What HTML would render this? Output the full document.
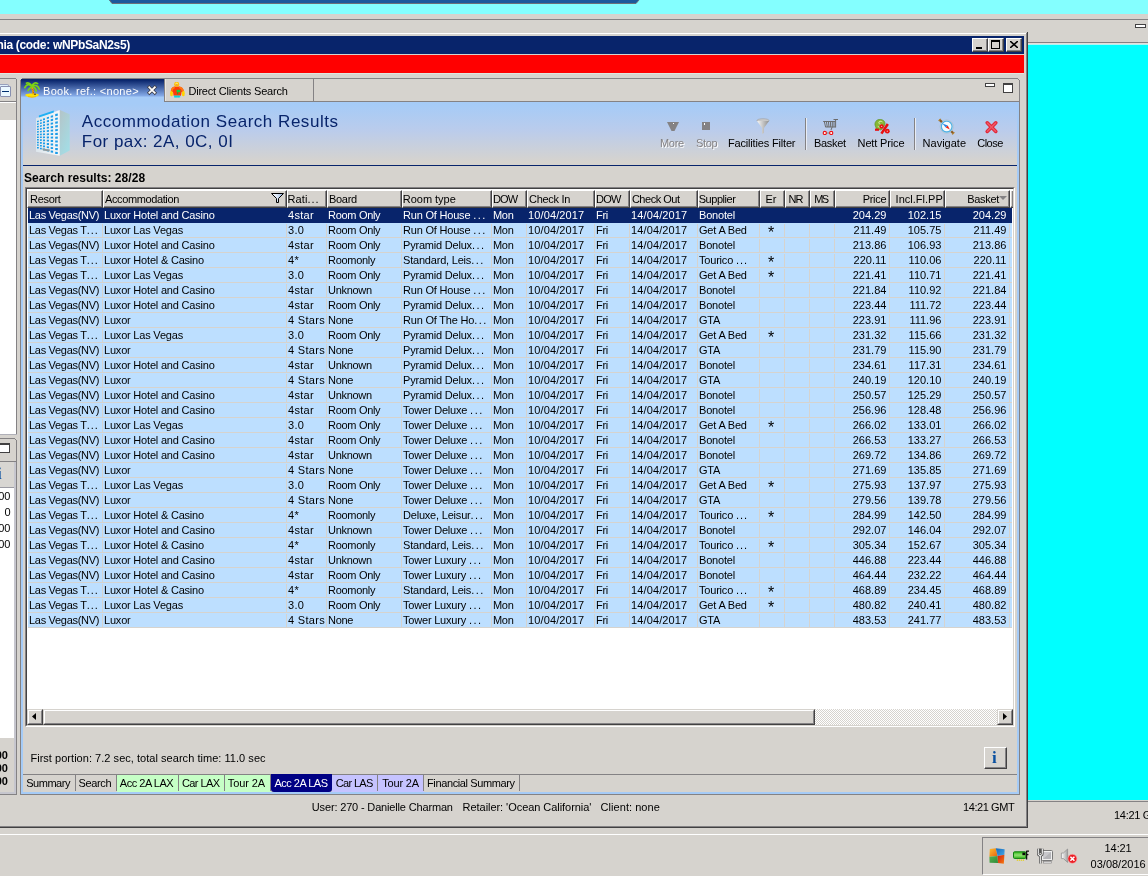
<!DOCTYPE html>
<html><head><meta charset="utf-8"><title>Accommodation Search Results</title>
<style>
html,body{margin:0;padding:0}
body{will-change:transform;width:1148px;height:876px;position:relative;overflow:hidden;background:#D6D3CE;font-family:"Liberation Sans",sans-serif;font-size:11px;color:#000;line-height:13px}
div,span,i,svg,b{position:absolute;box-sizing:border-box;display:block}
.t{white-space:pre;letter-spacing:-0.3px}
/* raised button */
.btn{background:#D6D3CE;border-top:1px solid #fff;border-left:1px solid #fff;border-right:1px solid #424142;border-bottom:1px solid #424142}
.btn:after{content:"";position:absolute;left:0;top:0;right:0;bottom:0;border-right:1px solid #848284;border-bottom:1px solid #848284}
/* scrollbar buttons */
.sbtn{background:#D6D3CE;border-top:1px solid #D6D3CE;border-left:1px solid #D6D3CE;border-right:1px solid #424142;border-bottom:1px solid #424142}
.sbtn:after{content:"";position:absolute;left:0;top:0;right:0;bottom:0;border-top:1px solid #fff;border-left:1px solid #fff;border-right:1px solid #848284;border-bottom:1px solid #848284}
/* table */
.hc{top:190px;height:18px;background:#D6D3CE;border-top:1px solid #fff;border-left:1px solid #fff;border-right:1px solid #424142;border-bottom:1px solid #424142;overflow:hidden}
.hc:after{content:"";position:absolute;left:0;top:0;right:0;bottom:0;border-right:1px solid #848284;border-bottom:1px solid #848284}
.hc span{top:2px;white-space:pre;letter-spacing:-0.3px}
em{font-style:normal;letter-spacing:1px}
.flt{right:2px;top:2px}
.sortarr{right:2px;top:5px;width:0;height:0;border-left:4px solid transparent;border-right:4px solid transparent;border-top:4px solid #848284}
.row{left:28px;width:984px;height:15px;background:#BDDFFF;border-bottom:1px solid #D6D3CE}
.row .c{top:1px;height:14px;white-space:pre;overflow:hidden;letter-spacing:-0.3px;padding-left:1px;border-right:1px solid #D6D3CE;line-height:13px}
.row .c.first{padding-left:1px}
.row .c.num{letter-spacing:0.12px}
.row .k1{letter-spacing:-0.2px}.row .k2{letter-spacing:0.3px}.row .k4{letter-spacing:-0.2px}.row .k4 em{letter-spacing:1.5px}.row .k9{letter-spacing:-0.2px}.row .k10{font-size:16px;line-height:17px;letter-spacing:0;padding-right:2px}
.row .c.ar{text-align:right;padding-right:2.6px;letter-spacing:0}
.row .c.ac{text-align:center;padding-left:0}
.row.sel{background:#08246B;color:#fff;border-bottom-color:#08246B}
.row.sel .c{border-right-color:#08246B}
</style></head><body>
<!-- desktop strips -->
<div style="left:0;top:0;width:1148px;height:14px;background:#84FFFF"></div>
<svg style="left:100px;top:0" width="550" height="6" viewBox="100 0 550 6"><polygon points="109,0 639,0 636,3.5 112,3.5" fill="#1C5A9C"/><path d="M109.5 0 L112 3.5 H636 L639 0" fill="none" stroke="#6B7078" stroke-width="1"/></svg>
<div style="left:0;top:19px;width:1148px;height:1px;background:#848284"></div>
<div style="left:1028px;top:42px;width:120px;height:1px;background:#848284"></div>
<div style="left:1028px;top:43px;width:120px;height:1px;background:#E6DED8"></div><div style="left:0;top:73px;width:1024px;height:1px;background:#DEE6E0"></div>
<div style="left:1028px;top:44px;width:120px;height:756px;background:#00FFFF"></div><div style="left:1028px;top:44px;width:120px;height:1px;background:#B0F4F4"></div>
<div style="left:1028px;top:801px;width:120px;height:1px;background:#848284"></div>
<div style="left:1135px;top:24px;width:11px;height:4px;background:#fff;border:1px solid #424142"></div>
<span class="t" style="left:1114px;top:809px">14:21 GMT</span>
<!-- main window frame -->
<div style="left:0;top:33px;width:1026px;height:1px;background:#fff"></div>
<div style="left:1026px;top:33px;width:1px;height:794px;background:#848284"></div>
<div style="left:1027px;top:32px;width:1px;height:796px;background:#424142"></div>
<div style="left:0;top:826px;width:1027px;height:1px;background:#848284"></div>
<div style="left:0;top:827px;width:1028px;height:1px;background:#424142"></div>
<div style="left:0;top:36px;width:1024px;height:18px;background:#08246B"></div>
<div style="left:0;top:55px;width:1024px;height:18px;background:#FF0000"></div>
<span class="t" style="left:-3.5px;top:39px;font-size:12px;color:#fff;font-weight:bold;letter-spacing:-0.33px" id="ttl">nia (code: wNPbSaN2s5)</span>
<!-- window buttons -->
<div class="btn" style="left:972px;top:38px;width:16px;height:14px"><i style="left:3px;top:8px;width:6px;height:2px;background:#000"></i></div>
<div class="btn" style="left:988px;top:38px;width:16px;height:14px"><i style="left:2px;top:1px;width:9px;height:9px;border:1px solid #000;border-top-width:2px"></i></div>
<div class="btn" style="left:1006px;top:38px;width:16px;height:14px"><svg style="left:3px;top:2px" width="8" height="7" viewBox="0 0 8 7"><path d="M0 0 L8 7 M8 0 L0 7" stroke="#000" stroke-width="1.6"/></svg></div>
<!-- left side panel (cut off) -->
<div style="left:0;top:78px;width:16px;height:1px;background:#848284"></div>
<div style="left:16px;top:79px;width:1px;height:356px;background:#848284"></div>
<div style="left:0;top:84px;width:9px;height:11px;background:#E0F0FC;border:1px solid #98A0BC;border-left:0;border-radius:0 2px 0 0"></div>
<div style="left:0;top:86px;width:11px;height:11px;background:#EAF8FF;border:1px solid #8890B0;border-radius:1px"><i style="left:1px;top:4px;width:7px;height:1px;background:#003070"></i></div>
<div style="left:0;top:101px;width:16px;height:1px;background:#848284"></div>
<div style="left:0;top:102px;width:16px;height:1px;background:#fff"></div>
<div style="left:0;top:120px;width:16px;height:314px;background:#fff"></div>
<div style="left:0;top:434px;width:17px;height:1px;background:#B0B0B8"></div>
<div style="left:0;top:438px;width:15px;height:1px;background:#848284"></div>
<div style="left:15px;top:439px;width:1px;height:1px;background:#848284"></div>
<div style="left:16px;top:440px;width:1px;height:354px;background:#848284"></div>
<div style="left:14px;top:462px;width:2px;height:332px;background:#C6C6CE"></div>
<div style="left:0;top:792px;width:16px;height:2px;background:#C6C6CE"></div>
<div style="left:0;top:443px;width:10px;height:10px;background:#fff;border:1px solid #424142;border-top-width:2px;border-left:0"></div>
<div style="left:0;top:461px;width:16px;height:1px;background:#848284"></div>
<div style="left:0;top:462px;width:14px;height:25px;background:#D8D6D2"></div>
<span style="left:-3px;top:465px;font-family:'Liberation Serif',serif;font-weight:bold;font-size:17px;line-height:17px;color:#0A50A0">i</span>
<div style="left:0;top:487px;width:14px;height:1px;background:#9C9CA4"></div>
<div style="left:0;top:488px;width:14px;height:250px;background:#fff"></div>
<span class="t" style="left:-3.5px;top:490px;width:14px;text-align:right;letter-spacing:0">00</span>
<span class="t" style="left:-3.5px;top:506px;width:14px;text-align:right;letter-spacing:0">0</span>
<span class="t" style="left:-3.5px;top:522px;width:14px;text-align:right;letter-spacing:0">00</span>
<span class="t" style="left:-3.5px;top:538px;width:14px;text-align:right;letter-spacing:0">00</span>
<span class="t" style="left:-6px;top:749px;width:14px;text-align:right;letter-spacing:0;font-weight:bold">00</span>
<span class="t" style="left:-6px;top:762px;width:14px;text-align:right;letter-spacing:0;font-weight:bold">00</span>
<span class="t" style="left:-6px;top:775px;width:14px;text-align:right;letter-spacing:0;font-weight:bold">00</span>
<div style="left:0;top:794px;width:17px;height:1px;background:#848284"></div>
<!-- tab folder -->
<div style="left:22px;top:78px;width:996px;height:1px;background:#848284"></div>
<div style="left:21px;top:79px;width:1px;height:1px;background:#848284"></div>
<div style="left:1018px;top:79px;width:1px;height:1px;background:#848284"></div>
<div style="left:20px;top:80px;width:1px;height:714px;background:#848284"></div>
<div style="left:1019px;top:80px;width:1px;height:714px;background:#848284"></div>
<div style="left:20px;top:794px;width:1000px;height:1px;background:#848284"></div>
<div style="left:164px;top:101px;width:855px;height:1px;background:#848284"></div>
<div style="left:21px;top:79px;width:143px;height:23px;background:linear-gradient(#08246B 0px,#08246B 1px,#86ABE8 17px,#A5CBF7 18px)"></div>
<div style="left:164px;top:79px;width:1px;height:22px;background:#848284"></div><div style="left:165px;top:79px;width:1px;height:22px;background:#E8E6E0"></div>
<div style="left:313px;top:79px;width:1px;height:22px;background:#848284"></div>
<!-- palm icon -->
<svg style="left:24px;top:82px" width="16" height="16" viewBox="0 0 16 16"><path d="M1 13.2 Q2 11.6 6 11.6 H11 Q14.6 11.8 15 13.2 Q13 15.4 8 15.2 Q3 15.4 1 13.2Z" fill="#FCE404"/><path d="M4 14.6 Q8 15.8 12 14.6" stroke="#F0B800" stroke-width="1" fill="none"/><path d="M9.2 12.4 C9.4 9.4 8.8 7 7.8 4.6" stroke="#F0A008" stroke-width="1.9" fill="none"/><path d="M9.6 11 L8.9 9.6 M9.3 8.6 L8.5 7.4" stroke="#B05808" stroke-width=".9"/><path d="M10 12.2 h2" stroke="#503010" stroke-width="1"/><path d="M7.8 4.4 C5.6 1.6 2.6 2 0.8 5.6 M7.8 4.4 C6.2 1 3.8 0.4 2.4 1.2 M7.8 4.4 C8.6 1 11.6 0.2 13.6 1.6 M7.8 4.4 C11 2.4 14.2 3.6 15.2 7 M7.8 4.4 C7 5.6 5 6.8 4 8.6 M7.8 4.4 C10.6 5 11.8 6.8 12.2 9" stroke="#7CD414" stroke-width="1.7" fill="none" stroke-linecap="round"/></svg>
<span class="t" style="left:43px;top:85px;color:#fff;letter-spacing:0.299px" id="tab1">Book. ref.: &lt;none&gt;</span>
<svg style="left:146px;top:84px" width="12" height="12" viewBox="0 0 12 12"><path d="M3.3 3.3 L8.8 8.8 M8.8 3.3 L3.3 8.8" stroke="#3C3C44" stroke-width="3.3" stroke-linecap="square"/><path d="M3.3 3.3 L8.8 8.8 M8.8 3.3 L3.3 8.8" stroke="#fff" stroke-width="1.8" stroke-linecap="square"/></svg>
<!-- second tab icon (person) -->
<svg style="left:170px;top:82px" width="15" height="16" viewBox="0 0 15 16"><ellipse cx="1.5" cy="11.4" rx="1.5" ry="2.8" fill="#FFD400"/><ellipse cx="13.3" cy="11.4" rx="1.5" ry="2.8" fill="#FFD400"/><path d="M0.8 8.6 Q1.4 5 4.6 4.5 H9.4 Q12.8 5 13.8 8.6 L11.6 10 L11 13.8 H3.6 L3 10 Z" fill="#FF3A08"/><path d="M0.8 8.6 Q1.4 5 4.6 4.5 L5 6 Q2.6 6.6 2.6 9.6Z M13.8 8.6 Q12.8 5 9.4 4.5 L9 6 Q11.6 6.6 12 9.6Z" fill="#FF7A10"/><rect x="6.6" y="7.8" width="3.7" height="2.5" fill="#10D444"/><rect x="7.2" y="10.3" width="1" height="2" fill="#20A030"/><rect x="4" y="13.6" width="6.2" height="1.9" fill="#00E4E4"/><path d="M6 13.6 v1.9 M8.2 13.6 v1.9" stroke="#40A0C0" stroke-width=".6"/><circle cx="6.7" cy="2.3" r="2.5" fill="#FFC000"/><circle cx="6.7" cy="2.1" r="1.5" fill="#FFE860"/><path d="M5.6 2.9 h2.2" stroke="#E06000" stroke-width=".8"/></svg>
<span class="t" style="left:188.4px;top:85px;letter-spacing:-0.19px" id="tab2">Direct Clients Search</span>
<div style="left:985px;top:83px;width:10px;height:4px;background:#fff;border:1px solid #424142"></div>
<div style="left:1003px;top:83px;width:10px;height:10px;background:#fff;border:1px solid #424142;border-top-width:2px"></div>
<!-- blue body border -->
<div style="left:21px;top:102px;width:2px;height:692px;background:#A5CBF7"></div>
<div style="left:1017px;top:102px;width:2px;height:692px;background:#A5CBF7"></div>
<div style="left:21px;top:792px;width:998px;height:2px;background:#A5CBF7"></div>
<!-- banner -->
<div style="left:23px;top:102px;width:994px;height:63px;background:linear-gradient(#A5CBF7 0px,#A5CBF7 2px,#BACCEC 28px,#D6D3CE 60px)"></div>
<div style="left:23px;top:165px;width:994px;height:1px;background:#08246B"></div>
<!-- building icon -->
<svg style="left:34px;top:108px" width="40" height="50" viewBox="0 0 40 50">
<defs><linearGradient id="g1" x1="0" x2="1"><stop offset="0" stop-color="#DDE6EC"/><stop offset="1" stop-color="#F4F7F9"/></linearGradient><linearGradient id="g2" x1="0" y1="0" x2="0.6" y2="1"><stop offset="0" stop-color="#B4C4C8"/><stop offset="1" stop-color="#A4DCE4"/></linearGradient></defs>
<polygon points="2,10.2 25.8,2.1 25.8,47.7 2,43.7" fill="url(#g1)"/><polygon points="25.8,2.1 35.7,6.3 35.7,42.4 25.8,47.7" fill="url(#g2)"/>
<polygon points="4.9,7.4 19.8,2.4 19.8,4.6 4.9,9.6" fill="#20B0F4"/>
<path d="M3.0 12.9L4.8 12.5V13.9L3.0 14.3ZM3.0 15.5L4.8 15.2V16.6L3.0 16.9ZM3.0 18.1L4.8 17.8V19.3L3.0 19.5ZM3.0 20.7L4.8 20.5V21.9L3.0 22.1ZM3.0 23.3L4.8 23.1V24.6L3.0 24.7ZM3.0 25.9L4.8 25.8V27.2L3.0 27.3ZM3.0 28.5L4.8 28.4V29.9L3.0 29.9ZM3.0 31.1L4.8 31.1V32.5L3.0 32.5ZM3.0 33.7L4.8 33.7V35.2L3.0 35.2ZM3.0 36.3L4.8 36.4V37.8L3.0 37.8ZM3.0 38.9L4.8 39.0V40.5L3.0 40.4ZM6.0 11.8L7.8 11.4V12.9L6.0 13.3ZM6.0 14.6L7.8 14.2V15.8L6.0 16.1ZM6.0 17.4L7.8 17.1V18.6L6.0 18.9ZM6.0 20.2L7.8 19.9V21.5L6.0 21.7ZM6.0 22.9L7.8 22.8V24.3L6.0 24.5ZM6.0 25.7L7.8 25.6V27.2L6.0 27.3ZM6.0 28.5L7.8 28.4V30.0L6.0 30.1ZM6.0 31.3L7.8 31.3V32.8L6.0 32.9ZM6.0 34.1L7.8 34.1V35.7L6.0 35.7ZM6.0 36.9L7.8 37.0V38.5L6.0 38.5ZM6.0 39.7L7.8 39.8V41.4L6.0 41.3ZM9.0 10.6L11.0 10.2V11.9L9.0 12.3ZM9.0 13.6L11.0 13.3V14.9L9.0 15.3ZM9.0 16.6L11.0 16.3V18.0L9.0 18.3ZM9.0 19.6L11.0 19.4V21.0L9.0 21.3ZM9.0 22.6L11.0 22.4V24.1L9.0 24.3ZM9.0 25.6L11.0 25.4V27.1L9.0 27.2ZM9.0 28.6L11.0 28.5V30.1L9.0 30.2ZM9.0 31.6L11.0 31.5V33.2L9.0 33.2ZM9.0 34.5L11.0 34.6V36.2L9.0 36.2ZM9.0 37.5L11.0 37.6V39.3L9.0 39.2ZM9.0 40.5L11.0 40.6V42.3L9.0 42.2ZM12.8 9.2L15.0 8.8V10.6L12.8 11.0ZM12.8 12.5L15.0 12.1V13.9L12.8 14.3ZM12.8 15.7L15.0 15.4V17.2L12.8 17.5ZM12.8 18.9L15.0 18.7V20.4L12.8 20.7ZM12.8 22.2L15.0 21.9V23.7L12.8 24.0ZM12.8 25.4L15.0 25.2V27.0L12.8 27.2ZM12.8 28.6L15.0 28.5V30.3L12.8 30.4ZM12.8 31.8L15.0 31.8V33.6L12.8 33.6ZM12.8 35.1L15.0 35.1V36.9L12.8 36.9ZM12.8 38.3L15.0 38.4V40.2L12.8 40.1ZM12.8 41.5L15.0 41.7V43.5L12.8 43.3ZM16.7 7.8L19.1 7.3V9.2L16.7 9.7ZM16.7 11.3L19.1 10.8V12.8L16.7 13.2ZM16.7 14.8L19.1 14.4V16.3L16.7 16.7ZM16.7 18.2L19.1 17.9V19.9L16.7 20.2ZM16.7 21.7L19.1 21.5V23.4L16.7 23.6ZM16.7 25.2L19.1 25.0V26.9L16.7 27.1ZM16.7 28.7L19.1 28.6V30.5L16.7 30.6ZM16.7 32.1L19.1 32.1V34.0L16.7 34.1ZM16.7 35.6L19.1 35.6V37.6L16.7 37.6ZM16.7 39.1L19.1 39.2V41.1L16.7 41.0ZM16.7 42.6L19.1 42.7V44.7L16.7 44.5ZM21.2 6.1L23.8 5.6V7.7L21.2 8.2ZM21.2 9.9L23.8 9.4V11.5L21.2 12.0ZM21.2 13.7L23.8 13.3V15.4L21.2 15.8ZM21.2 17.4L23.8 17.1V19.2L21.2 19.5ZM21.2 21.2L23.8 20.9V23.0L21.2 23.3ZM21.2 25.0L23.8 24.8V26.9L21.2 27.0ZM21.2 28.7L23.8 28.6V30.7L21.2 30.8ZM21.2 32.5L23.8 32.4V34.5L21.2 34.6ZM21.2 36.3L23.8 36.3V38.4L21.2 38.3ZM21.2 40.0L23.8 40.1V42.2L21.2 42.1ZM21.2 43.8L23.8 43.9V46.0L21.2 45.9Z" fill="#1C9CE8"/>
<path d="M8 40.6 L16 41.6 L15.4 43.4 L9 42.6 Z" fill="#8C989C"/>
</svg>
<span style="left:81.8px;top:112px;font-size:17px;line-height:20px;color:#08246B;white-space:pre;letter-spacing:0.528px" id="h1">Accommodation Search Results</span>
<span style="left:81.8px;top:132px;font-size:17px;line-height:20px;color:#08246B;white-space:pre;letter-spacing:0.467px" id="h2">For pax: 2A, 0C, 0I</span>
<!-- toolbar -->
<svg style="left:667px;top:122px" width="12" height="9" viewBox="0 0 12 9"><polygon points="0,0 12,0 7.5,9 4.5,9" fill="#848284"/><rect x="6" y="1" width="1" height="1" fill="#fff"/></svg>
<span class="t" style="left:661px;top:138px;color:#fff">More</span><span class="t" style="left:660px;top:137px;color:#848284" id="tb1">More</span>
<div style="left:702px;top:122px;width:8px;height:8px;background:#848284"><i style="left:2px;top:1px;width:1px;height:2px;background:#fff"></i></div>
<span class="t" style="left:697px;top:138px;color:#fff">Stop</span><span class="t" style="left:696px;top:137px;color:#848284" id="tb2">Stop</span>
<svg style="left:756px;top:118px" width="14" height="17" viewBox="0 0 14 17"><defs><linearGradient id="fg" x1="0" x2="1"><stop offset="0" stop-color="#F8F8F8"/><stop offset="1" stop-color="#909090"/></linearGradient></defs><ellipse cx="7" cy="2.5" rx="6" ry="1.8" fill="#C8C8C8" stroke="#A0A0A0" stroke-width=".6"/><path d="M1 3 L6 10 V16 L8 15 V10 L13 3 Z" fill="url(#fg)"/></svg>
<span class="t" style="left:728px;top:137px;letter-spacing:-0.175px" id="tb3">Facilities Filter</span>
<div style="left:805px;top:118px;width:1px;height:32px;background:#848284"></div><div style="left:806px;top:118px;width:1px;height:32px;background:#E8ECF4"></div>
<!-- basket icon -->
<svg style="left:822px;top:119px" width="17" height="16" viewBox="0 0 17 16"><path d="M11.5 0.5 H16 M13.6 0.5 V8.4 M1.2 2.5 H13.6 M3.4 8 H13.6 M10.2 8 L9 11" stroke="#6C6C6C" stroke-width="1" fill="none"/><path d="M2.3 2.5 L3.6 8 M4.4 2.5 L5.3 8 M6.4 2.5 L7 8 M8.4 2.5 L8.7 8 M10.3 2.5 V8 M12 2.5 V8" stroke="#6C6C6C" stroke-width="1" fill="none"/><path d="M4 14 H8" stroke="#848284" stroke-width="1"/><circle cx="2.8" cy="14" r="1.6" fill="#fff" stroke="#F01010" stroke-width="1.1"/><circle cx="9.2" cy="14" r="1.6" fill="#fff" stroke="#F01010" stroke-width="1.1"/></svg>
<span class="t" style="left:814px;top:137px;letter-spacing:-0.3px" id="tb4">Basket</span>
<!-- nett price icon -->
<svg style="left:873px;top:119px" width="18" height="16" viewBox="0 0 18 16"><path d="M2 6 C1.5 2 5 -0.5 9 0.8 C12 1.8 12.5 4.5 11.5 6.5 L8 11 L3.5 10 Z" fill="#86B834" stroke="#5C9424" stroke-width=".7"/><path d="M9.5 3 C8 1.6 5.4 2.2 5.8 4 C6.2 5.4 8.8 5.2 8.6 7 C8.4 8.4 6 8.4 4.8 7.4" stroke="#D4ECA0" stroke-width="1" fill="none"/><rect x="2" y="9.6" width="4" height="2.2" fill="#E81010"/><circle cx="8.6" cy="7.4" r="2.2" fill="#E81010"/><circle cx="14.3" cy="12.2" r="2.4" fill="#E81010"/><path d="M14.8 5 L8.4 14.6" stroke="#E81010" stroke-width="2.6"/><circle cx="8.6" cy="7.4" r=".7" fill="#F8A0A0"/><circle cx="14.3" cy="12.2" r=".7" fill="#F8A0A0"/></svg>
<span class="t" style="left:857.6px;top:137px;letter-spacing:-0.145px" id="tb5">Nett Price</span>
<div style="left:914px;top:118px;width:1px;height:32px;background:#848284"></div><div style="left:915px;top:118px;width:1px;height:32px;background:#E8ECF4"></div>
<!-- navigate icon -->
<svg style="left:937px;top:118px" width="19" height="18" viewBox="0 0 19 18"><circle cx="9.7" cy="8.6" r="6.6" fill="#E8EEF2" stroke="#A8B8C4" stroke-width=".7"/><circle cx="9.7" cy="8.6" r="5.4" fill="#F8FBFC" stroke="#50B0E4" stroke-width="1.3"/><path d="M5.4 5.6 L10.7 7.6 L8.8 9.5 Z" fill="#2484E4"/><path d="M12.8 11.6 L8.8 9.5 L10.7 7.6 Z" fill="#F42010"/><path d="M2.4 1.6 L4.9 4.1" stroke="#8A5A22" stroke-width="2.2"/><path d="M14.3 13.3 L16.6 15.6" stroke="#8A5A22" stroke-width="2.2"/><path d="M1.6 2.8 L3.6 0.8" stroke="#B88838" stroke-width="1.2"/><path d="M15.2 16.4 L17.4 14.4" stroke="#B88838" stroke-width="1.2"/></svg>
<span class="t" style="left:922.6px;top:137px;letter-spacing:0px" id="tb6">Navigate</span>
<svg style="left:984px;top:120px" width="15" height="15" viewBox="0 0 15 15"><path d="M3.2 2.8 L11.8 11.4 M11.8 2.8 L3.2 11.4" stroke="#E02838" stroke-width="3.6" stroke-linecap="round"/><path d="M3.4 3 L11.6 11.2 M11.6 3 L3.4 11.2" stroke="#F05868" stroke-width="1.6" stroke-linecap="round"/></svg>
<span class="t" style="left:977.2px;top:137px;letter-spacing:-0.5px" id="tb7">Close</span>
<!-- search results label -->
<span class="t" style="left:24px;top:172px;font-size:12px;font-weight:bold;letter-spacing:0.05px" id="sr">Search results: 28/28</span>
<!-- table frame -->
<div style="left:25px;top:187px;width:990px;height:540px;background:#fff;border-top:1px solid #848284;border-left:1px solid #848284;border-right:1px solid #fff;border-bottom:1px solid #fff"></div>
<div style="left:26px;top:188px;width:988px;height:538px;border-top:1px solid #424142;border-left:1px solid #424142;border-right:1px solid #D6D3CE;border-bottom:1px solid #D6D3CE"></div>
<div class="hc" style="left:1010px;width:3px;border-right:0"></div>

<div class="hc al first" style="left:27px;width:76px"><span style="left:2px;letter-spacing:-0.3px" id="hd0">Resort</span></div>
<div class="hc al" style="left:103px;width:184px"><span style="left:1px;letter-spacing:-0.383px" id="hd1">Accommodation</span><svg class="flt" width="13" height="10" viewBox="0 0 13 10"><defs><linearGradient id="fl" x1="0" x2="1"><stop offset="0" stop-color="#fff"/><stop offset=".5" stop-color="#D8E4F4"/><stop offset="1" stop-color="#88A8DC"/></linearGradient></defs><path d="M0.5 0.5 H12.5 L7.5 5.5 V9.5 H5.5 V5.5 Z" fill="url(#fl)" stroke="#000" stroke-width="1"/></svg></div>
<div class="hc al" style="left:287px;width:40px"><span style="left:-0.4px;letter-spacing:0.067px" id="hd2">Rati<em>...</em></span></div>
<div class="hc al" style="left:327px;width:75px"><span style="left:1px;letter-spacing:-0.3px" id="hd3">Board</span></div>
<div class="hc al" style="left:402px;width:90px"><span style="left:-0.2px;letter-spacing:-0.025px" id="hd4">Room type</span></div>
<div class="hc al" style="left:492px;width:35px"><span style="left:0px;letter-spacing:-0.9px" id="hd5">DOW</span></div>
<div class="hc al" style="left:527px;width:68px"><span style="left:1px;letter-spacing:-0.3px" id="hd6">Check In</span></div>
<div class="hc al" style="left:595px;width:35px"><span style="left:0px;letter-spacing:-0.8px" id="hd7">DOW</span></div>
<div class="hc al" style="left:630px;width:68px"><span style="left:0.9px;letter-spacing:-0.475px" id="hd8">Check Out</span></div>
<div class="hc al" style="left:698px;width:62px"><span style="left:-0.3px;letter-spacing:-0.443px" id="hd9">Supplier</span></div>
<div class="hc ac" style="left:760px;width:25px"><span style="left:4.6px;letter-spacing:-0.3px" id="hd10">Er</span></div>
<div class="hc ac" style="left:785px;width:25px"><span style="left:2.4px;letter-spacing:-0.8px" id="hd11">NR</span></div>
<div class="hc ac" style="left:810px;width:25px"><span style="left:3.2px;letter-spacing:-1.6px" id="hd12">MS</span></div>
<div class="hc ar" style="left:835px;width:55px"><span style="left:26.7px;letter-spacing:-0.3px" id="hd13">Price</span></div>
<div class="hc ar" style="left:890px;width:55px"><span style="left:4.6px;letter-spacing:0.011px" id="hd14">Incl.Fl.PP</span></div>
<div class="hc ar bsk" style="left:945px;width:65px"><span style="left:21.2px;letter-spacing:-0.3px" id="hd15">Basket</span><i class="sortarr"></i></div>
<div class="row sel" style="top:208px"><span class="c al first k0" style="left:0px;width:75px">Las Vegas(NV)</span><span class="c al k1" style="left:75px;width:184px">Luxor Hotel and Casino</span><span class="c al k2" style="left:259px;width:40px">4star</span><span class="c al k3" style="left:299px;width:75px">Room Only</span><span class="c al k4" style="left:374px;width:90px">Run Of House <em>...</em></span><span class="c al k5" style="left:464px;width:35px">Mon</span><span class="c al num k6" style="left:499px;width:68px">10/04/2017</span><span class="c al k7" style="left:567px;width:35px">Fri</span><span class="c al num k8" style="left:602px;width:68px">14/04/2017</span><span class="c al k9" style="left:670px;width:62px">Bonotel</span><span class="c ac k10" style="left:732px;width:25px"></span><span class="c ac k11" style="left:757px;width:25px"></span><span class="c ac k12" style="left:782px;width:25px"></span><span class="c ar k13" style="left:807px;width:55px">204.29</span><span class="c ar k14" style="left:862px;width:55px">102.15</span><span class="c ar k15" style="left:917px;width:65px">204.29</span></div>
<div class="row" style="top:223px"><span class="c al first k0" style="left:0px;width:75px">Las Vegas T<em>...</em></span><span class="c al k1" style="left:75px;width:184px">Luxor Las Vegas</span><span class="c al k2" style="left:259px;width:40px">3.0</span><span class="c al k3" style="left:299px;width:75px">Room Only</span><span class="c al k4" style="left:374px;width:90px">Run Of House <em>...</em></span><span class="c al k5" style="left:464px;width:35px">Mon</span><span class="c al num k6" style="left:499px;width:68px">10/04/2017</span><span class="c al k7" style="left:567px;width:35px">Fri</span><span class="c al num k8" style="left:602px;width:68px">14/04/2017</span><span class="c al k9" style="left:670px;width:62px">Get A Bed</span><span class="c ac k10" style="left:732px;width:25px">*</span><span class="c ac k11" style="left:757px;width:25px"></span><span class="c ac k12" style="left:782px;width:25px"></span><span class="c ar k13" style="left:807px;width:55px">211.49</span><span class="c ar k14" style="left:862px;width:55px">105.75</span><span class="c ar k15" style="left:917px;width:65px">211.49</span></div>
<div class="row" style="top:238px"><span class="c al first k0" style="left:0px;width:75px">Las Vegas(NV)</span><span class="c al k1" style="left:75px;width:184px">Luxor Hotel and Casino</span><span class="c al k2" style="left:259px;width:40px">4star</span><span class="c al k3" style="left:299px;width:75px">Room Only</span><span class="c al k4" style="left:374px;width:90px">Pyramid Delux<em>...</em></span><span class="c al k5" style="left:464px;width:35px">Mon</span><span class="c al num k6" style="left:499px;width:68px">10/04/2017</span><span class="c al k7" style="left:567px;width:35px">Fri</span><span class="c al num k8" style="left:602px;width:68px">14/04/2017</span><span class="c al k9" style="left:670px;width:62px">Bonotel</span><span class="c ac k10" style="left:732px;width:25px"></span><span class="c ac k11" style="left:757px;width:25px"></span><span class="c ac k12" style="left:782px;width:25px"></span><span class="c ar k13" style="left:807px;width:55px">213.86</span><span class="c ar k14" style="left:862px;width:55px">106.93</span><span class="c ar k15" style="left:917px;width:65px">213.86</span></div>
<div class="row" style="top:253px"><span class="c al first k0" style="left:0px;width:75px">Las Vegas T<em>...</em></span><span class="c al k1" style="left:75px;width:184px">Luxor Hotel &amp; Casino</span><span class="c al k2" style="left:259px;width:40px">4*</span><span class="c al k3" style="left:299px;width:75px">Roomonly</span><span class="c al k4" style="left:374px;width:90px">Standard, Leis<em>...</em></span><span class="c al k5" style="left:464px;width:35px">Mon</span><span class="c al num k6" style="left:499px;width:68px">10/04/2017</span><span class="c al k7" style="left:567px;width:35px">Fri</span><span class="c al num k8" style="left:602px;width:68px">14/04/2017</span><span class="c al k9" style="left:670px;width:62px">Tourico <em>...</em></span><span class="c ac k10" style="left:732px;width:25px">*</span><span class="c ac k11" style="left:757px;width:25px"></span><span class="c ac k12" style="left:782px;width:25px"></span><span class="c ar k13" style="left:807px;width:55px">220.11</span><span class="c ar k14" style="left:862px;width:55px">110.06</span><span class="c ar k15" style="left:917px;width:65px">220.11</span></div>
<div class="row" style="top:268px"><span class="c al first k0" style="left:0px;width:75px">Las Vegas T<em>...</em></span><span class="c al k1" style="left:75px;width:184px">Luxor Las Vegas</span><span class="c al k2" style="left:259px;width:40px">3.0</span><span class="c al k3" style="left:299px;width:75px">Room Only</span><span class="c al k4" style="left:374px;width:90px">Pyramid Delux<em>...</em></span><span class="c al k5" style="left:464px;width:35px">Mon</span><span class="c al num k6" style="left:499px;width:68px">10/04/2017</span><span class="c al k7" style="left:567px;width:35px">Fri</span><span class="c al num k8" style="left:602px;width:68px">14/04/2017</span><span class="c al k9" style="left:670px;width:62px">Get A Bed</span><span class="c ac k10" style="left:732px;width:25px">*</span><span class="c ac k11" style="left:757px;width:25px"></span><span class="c ac k12" style="left:782px;width:25px"></span><span class="c ar k13" style="left:807px;width:55px">221.41</span><span class="c ar k14" style="left:862px;width:55px">110.71</span><span class="c ar k15" style="left:917px;width:65px">221.41</span></div>
<div class="row" style="top:283px"><span class="c al first k0" style="left:0px;width:75px">Las Vegas(NV)</span><span class="c al k1" style="left:75px;width:184px">Luxor Hotel and Casino</span><span class="c al k2" style="left:259px;width:40px">4star</span><span class="c al k3" style="left:299px;width:75px">Unknown</span><span class="c al k4" style="left:374px;width:90px">Run Of House <em>...</em></span><span class="c al k5" style="left:464px;width:35px">Mon</span><span class="c al num k6" style="left:499px;width:68px">10/04/2017</span><span class="c al k7" style="left:567px;width:35px">Fri</span><span class="c al num k8" style="left:602px;width:68px">14/04/2017</span><span class="c al k9" style="left:670px;width:62px">Bonotel</span><span class="c ac k10" style="left:732px;width:25px"></span><span class="c ac k11" style="left:757px;width:25px"></span><span class="c ac k12" style="left:782px;width:25px"></span><span class="c ar k13" style="left:807px;width:55px">221.84</span><span class="c ar k14" style="left:862px;width:55px">110.92</span><span class="c ar k15" style="left:917px;width:65px">221.84</span></div>
<div class="row" style="top:298px"><span class="c al first k0" style="left:0px;width:75px">Las Vegas(NV)</span><span class="c al k1" style="left:75px;width:184px">Luxor Hotel and Casino</span><span class="c al k2" style="left:259px;width:40px">4star</span><span class="c al k3" style="left:299px;width:75px">Room Only</span><span class="c al k4" style="left:374px;width:90px">Pyramid Delux<em>...</em></span><span class="c al k5" style="left:464px;width:35px">Mon</span><span class="c al num k6" style="left:499px;width:68px">10/04/2017</span><span class="c al k7" style="left:567px;width:35px">Fri</span><span class="c al num k8" style="left:602px;width:68px">14/04/2017</span><span class="c al k9" style="left:670px;width:62px">Bonotel</span><span class="c ac k10" style="left:732px;width:25px"></span><span class="c ac k11" style="left:757px;width:25px"></span><span class="c ac k12" style="left:782px;width:25px"></span><span class="c ar k13" style="left:807px;width:55px">223.44</span><span class="c ar k14" style="left:862px;width:55px">111.72</span><span class="c ar k15" style="left:917px;width:65px">223.44</span></div>
<div class="row" style="top:313px"><span class="c al first k0" style="left:0px;width:75px">Las Vegas(NV)</span><span class="c al k1" style="left:75px;width:184px">Luxor</span><span class="c al k2" style="left:259px;width:40px">4 Stars</span><span class="c al k3" style="left:299px;width:75px">None</span><span class="c al k4" style="left:374px;width:90px">Run Of The Ho<em>...</em></span><span class="c al k5" style="left:464px;width:35px">Mon</span><span class="c al num k6" style="left:499px;width:68px">10/04/2017</span><span class="c al k7" style="left:567px;width:35px">Fri</span><span class="c al num k8" style="left:602px;width:68px">14/04/2017</span><span class="c al k9" style="left:670px;width:62px">GTA</span><span class="c ac k10" style="left:732px;width:25px"></span><span class="c ac k11" style="left:757px;width:25px"></span><span class="c ac k12" style="left:782px;width:25px"></span><span class="c ar k13" style="left:807px;width:55px">223.91</span><span class="c ar k14" style="left:862px;width:55px">111.96</span><span class="c ar k15" style="left:917px;width:65px">223.91</span></div>
<div class="row" style="top:328px"><span class="c al first k0" style="left:0px;width:75px">Las Vegas T<em>...</em></span><span class="c al k1" style="left:75px;width:184px">Luxor Las Vegas</span><span class="c al k2" style="left:259px;width:40px">3.0</span><span class="c al k3" style="left:299px;width:75px">Room Only</span><span class="c al k4" style="left:374px;width:90px">Pyramid Delux<em>...</em></span><span class="c al k5" style="left:464px;width:35px">Mon</span><span class="c al num k6" style="left:499px;width:68px">10/04/2017</span><span class="c al k7" style="left:567px;width:35px">Fri</span><span class="c al num k8" style="left:602px;width:68px">14/04/2017</span><span class="c al k9" style="left:670px;width:62px">Get A Bed</span><span class="c ac k10" style="left:732px;width:25px">*</span><span class="c ac k11" style="left:757px;width:25px"></span><span class="c ac k12" style="left:782px;width:25px"></span><span class="c ar k13" style="left:807px;width:55px">231.32</span><span class="c ar k14" style="left:862px;width:55px">115.66</span><span class="c ar k15" style="left:917px;width:65px">231.32</span></div>
<div class="row" style="top:343px"><span class="c al first k0" style="left:0px;width:75px">Las Vegas(NV)</span><span class="c al k1" style="left:75px;width:184px">Luxor</span><span class="c al k2" style="left:259px;width:40px">4 Stars</span><span class="c al k3" style="left:299px;width:75px">None</span><span class="c al k4" style="left:374px;width:90px">Pyramid Delux<em>...</em></span><span class="c al k5" style="left:464px;width:35px">Mon</span><span class="c al num k6" style="left:499px;width:68px">10/04/2017</span><span class="c al k7" style="left:567px;width:35px">Fri</span><span class="c al num k8" style="left:602px;width:68px">14/04/2017</span><span class="c al k9" style="left:670px;width:62px">GTA</span><span class="c ac k10" style="left:732px;width:25px"></span><span class="c ac k11" style="left:757px;width:25px"></span><span class="c ac k12" style="left:782px;width:25px"></span><span class="c ar k13" style="left:807px;width:55px">231.79</span><span class="c ar k14" style="left:862px;width:55px">115.90</span><span class="c ar k15" style="left:917px;width:65px">231.79</span></div>
<div class="row" style="top:358px"><span class="c al first k0" style="left:0px;width:75px">Las Vegas(NV)</span><span class="c al k1" style="left:75px;width:184px">Luxor Hotel and Casino</span><span class="c al k2" style="left:259px;width:40px">4star</span><span class="c al k3" style="left:299px;width:75px">Unknown</span><span class="c al k4" style="left:374px;width:90px">Pyramid Delux<em>...</em></span><span class="c al k5" style="left:464px;width:35px">Mon</span><span class="c al num k6" style="left:499px;width:68px">10/04/2017</span><span class="c al k7" style="left:567px;width:35px">Fri</span><span class="c al num k8" style="left:602px;width:68px">14/04/2017</span><span class="c al k9" style="left:670px;width:62px">Bonotel</span><span class="c ac k10" style="left:732px;width:25px"></span><span class="c ac k11" style="left:757px;width:25px"></span><span class="c ac k12" style="left:782px;width:25px"></span><span class="c ar k13" style="left:807px;width:55px">234.61</span><span class="c ar k14" style="left:862px;width:55px">117.31</span><span class="c ar k15" style="left:917px;width:65px">234.61</span></div>
<div class="row" style="top:373px"><span class="c al first k0" style="left:0px;width:75px">Las Vegas(NV)</span><span class="c al k1" style="left:75px;width:184px">Luxor</span><span class="c al k2" style="left:259px;width:40px">4 Stars</span><span class="c al k3" style="left:299px;width:75px">None</span><span class="c al k4" style="left:374px;width:90px">Pyramid Delux<em>...</em></span><span class="c al k5" style="left:464px;width:35px">Mon</span><span class="c al num k6" style="left:499px;width:68px">10/04/2017</span><span class="c al k7" style="left:567px;width:35px">Fri</span><span class="c al num k8" style="left:602px;width:68px">14/04/2017</span><span class="c al k9" style="left:670px;width:62px">GTA</span><span class="c ac k10" style="left:732px;width:25px"></span><span class="c ac k11" style="left:757px;width:25px"></span><span class="c ac k12" style="left:782px;width:25px"></span><span class="c ar k13" style="left:807px;width:55px">240.19</span><span class="c ar k14" style="left:862px;width:55px">120.10</span><span class="c ar k15" style="left:917px;width:65px">240.19</span></div>
<div class="row" style="top:388px"><span class="c al first k0" style="left:0px;width:75px">Las Vegas(NV)</span><span class="c al k1" style="left:75px;width:184px">Luxor Hotel and Casino</span><span class="c al k2" style="left:259px;width:40px">4star</span><span class="c al k3" style="left:299px;width:75px">Unknown</span><span class="c al k4" style="left:374px;width:90px">Pyramid Delux<em>...</em></span><span class="c al k5" style="left:464px;width:35px">Mon</span><span class="c al num k6" style="left:499px;width:68px">10/04/2017</span><span class="c al k7" style="left:567px;width:35px">Fri</span><span class="c al num k8" style="left:602px;width:68px">14/04/2017</span><span class="c al k9" style="left:670px;width:62px">Bonotel</span><span class="c ac k10" style="left:732px;width:25px"></span><span class="c ac k11" style="left:757px;width:25px"></span><span class="c ac k12" style="left:782px;width:25px"></span><span class="c ar k13" style="left:807px;width:55px">250.57</span><span class="c ar k14" style="left:862px;width:55px">125.29</span><span class="c ar k15" style="left:917px;width:65px">250.57</span></div>
<div class="row" style="top:403px"><span class="c al first k0" style="left:0px;width:75px">Las Vegas(NV)</span><span class="c al k1" style="left:75px;width:184px">Luxor Hotel and Casino</span><span class="c al k2" style="left:259px;width:40px">4star</span><span class="c al k3" style="left:299px;width:75px">Room Only</span><span class="c al k4" style="left:374px;width:90px">Tower Deluxe <em>...</em></span><span class="c al k5" style="left:464px;width:35px">Mon</span><span class="c al num k6" style="left:499px;width:68px">10/04/2017</span><span class="c al k7" style="left:567px;width:35px">Fri</span><span class="c al num k8" style="left:602px;width:68px">14/04/2017</span><span class="c al k9" style="left:670px;width:62px">Bonotel</span><span class="c ac k10" style="left:732px;width:25px"></span><span class="c ac k11" style="left:757px;width:25px"></span><span class="c ac k12" style="left:782px;width:25px"></span><span class="c ar k13" style="left:807px;width:55px">256.96</span><span class="c ar k14" style="left:862px;width:55px">128.48</span><span class="c ar k15" style="left:917px;width:65px">256.96</span></div>
<div class="row" style="top:418px"><span class="c al first k0" style="left:0px;width:75px">Las Vegas T<em>...</em></span><span class="c al k1" style="left:75px;width:184px">Luxor Las Vegas</span><span class="c al k2" style="left:259px;width:40px">3.0</span><span class="c al k3" style="left:299px;width:75px">Room Only</span><span class="c al k4" style="left:374px;width:90px">Tower Deluxe <em>...</em></span><span class="c al k5" style="left:464px;width:35px">Mon</span><span class="c al num k6" style="left:499px;width:68px">10/04/2017</span><span class="c al k7" style="left:567px;width:35px">Fri</span><span class="c al num k8" style="left:602px;width:68px">14/04/2017</span><span class="c al k9" style="left:670px;width:62px">Get A Bed</span><span class="c ac k10" style="left:732px;width:25px">*</span><span class="c ac k11" style="left:757px;width:25px"></span><span class="c ac k12" style="left:782px;width:25px"></span><span class="c ar k13" style="left:807px;width:55px">266.02</span><span class="c ar k14" style="left:862px;width:55px">133.01</span><span class="c ar k15" style="left:917px;width:65px">266.02</span></div>
<div class="row" style="top:433px"><span class="c al first k0" style="left:0px;width:75px">Las Vegas(NV)</span><span class="c al k1" style="left:75px;width:184px">Luxor Hotel and Casino</span><span class="c al k2" style="left:259px;width:40px">4star</span><span class="c al k3" style="left:299px;width:75px">Room Only</span><span class="c al k4" style="left:374px;width:90px">Tower Deluxe <em>...</em></span><span class="c al k5" style="left:464px;width:35px">Mon</span><span class="c al num k6" style="left:499px;width:68px">10/04/2017</span><span class="c al k7" style="left:567px;width:35px">Fri</span><span class="c al num k8" style="left:602px;width:68px">14/04/2017</span><span class="c al k9" style="left:670px;width:62px">Bonotel</span><span class="c ac k10" style="left:732px;width:25px"></span><span class="c ac k11" style="left:757px;width:25px"></span><span class="c ac k12" style="left:782px;width:25px"></span><span class="c ar k13" style="left:807px;width:55px">266.53</span><span class="c ar k14" style="left:862px;width:55px">133.27</span><span class="c ar k15" style="left:917px;width:65px">266.53</span></div>
<div class="row" style="top:448px"><span class="c al first k0" style="left:0px;width:75px">Las Vegas(NV)</span><span class="c al k1" style="left:75px;width:184px">Luxor Hotel and Casino</span><span class="c al k2" style="left:259px;width:40px">4star</span><span class="c al k3" style="left:299px;width:75px">Unknown</span><span class="c al k4" style="left:374px;width:90px">Tower Deluxe <em>...</em></span><span class="c al k5" style="left:464px;width:35px">Mon</span><span class="c al num k6" style="left:499px;width:68px">10/04/2017</span><span class="c al k7" style="left:567px;width:35px">Fri</span><span class="c al num k8" style="left:602px;width:68px">14/04/2017</span><span class="c al k9" style="left:670px;width:62px">Bonotel</span><span class="c ac k10" style="left:732px;width:25px"></span><span class="c ac k11" style="left:757px;width:25px"></span><span class="c ac k12" style="left:782px;width:25px"></span><span class="c ar k13" style="left:807px;width:55px">269.72</span><span class="c ar k14" style="left:862px;width:55px">134.86</span><span class="c ar k15" style="left:917px;width:65px">269.72</span></div>
<div class="row" style="top:463px"><span class="c al first k0" style="left:0px;width:75px">Las Vegas(NV)</span><span class="c al k1" style="left:75px;width:184px">Luxor</span><span class="c al k2" style="left:259px;width:40px">4 Stars</span><span class="c al k3" style="left:299px;width:75px">None</span><span class="c al k4" style="left:374px;width:90px">Tower Deluxe <em>...</em></span><span class="c al k5" style="left:464px;width:35px">Mon</span><span class="c al num k6" style="left:499px;width:68px">10/04/2017</span><span class="c al k7" style="left:567px;width:35px">Fri</span><span class="c al num k8" style="left:602px;width:68px">14/04/2017</span><span class="c al k9" style="left:670px;width:62px">GTA</span><span class="c ac k10" style="left:732px;width:25px"></span><span class="c ac k11" style="left:757px;width:25px"></span><span class="c ac k12" style="left:782px;width:25px"></span><span class="c ar k13" style="left:807px;width:55px">271.69</span><span class="c ar k14" style="left:862px;width:55px">135.85</span><span class="c ar k15" style="left:917px;width:65px">271.69</span></div>
<div class="row" style="top:478px"><span class="c al first k0" style="left:0px;width:75px">Las Vegas T<em>...</em></span><span class="c al k1" style="left:75px;width:184px">Luxor Las Vegas</span><span class="c al k2" style="left:259px;width:40px">3.0</span><span class="c al k3" style="left:299px;width:75px">Room Only</span><span class="c al k4" style="left:374px;width:90px">Tower Deluxe <em>...</em></span><span class="c al k5" style="left:464px;width:35px">Mon</span><span class="c al num k6" style="left:499px;width:68px">10/04/2017</span><span class="c al k7" style="left:567px;width:35px">Fri</span><span class="c al num k8" style="left:602px;width:68px">14/04/2017</span><span class="c al k9" style="left:670px;width:62px">Get A Bed</span><span class="c ac k10" style="left:732px;width:25px">*</span><span class="c ac k11" style="left:757px;width:25px"></span><span class="c ac k12" style="left:782px;width:25px"></span><span class="c ar k13" style="left:807px;width:55px">275.93</span><span class="c ar k14" style="left:862px;width:55px">137.97</span><span class="c ar k15" style="left:917px;width:65px">275.93</span></div>
<div class="row" style="top:493px"><span class="c al first k0" style="left:0px;width:75px">Las Vegas(NV)</span><span class="c al k1" style="left:75px;width:184px">Luxor</span><span class="c al k2" style="left:259px;width:40px">4 Stars</span><span class="c al k3" style="left:299px;width:75px">None</span><span class="c al k4" style="left:374px;width:90px">Tower Deluxe <em>...</em></span><span class="c al k5" style="left:464px;width:35px">Mon</span><span class="c al num k6" style="left:499px;width:68px">10/04/2017</span><span class="c al k7" style="left:567px;width:35px">Fri</span><span class="c al num k8" style="left:602px;width:68px">14/04/2017</span><span class="c al k9" style="left:670px;width:62px">GTA</span><span class="c ac k10" style="left:732px;width:25px"></span><span class="c ac k11" style="left:757px;width:25px"></span><span class="c ac k12" style="left:782px;width:25px"></span><span class="c ar k13" style="left:807px;width:55px">279.56</span><span class="c ar k14" style="left:862px;width:55px">139.78</span><span class="c ar k15" style="left:917px;width:65px">279.56</span></div>
<div class="row" style="top:508px"><span class="c al first k0" style="left:0px;width:75px">Las Vegas T<em>...</em></span><span class="c al k1" style="left:75px;width:184px">Luxor Hotel &amp; Casino</span><span class="c al k2" style="left:259px;width:40px">4*</span><span class="c al k3" style="left:299px;width:75px">Roomonly</span><span class="c al k4" style="left:374px;width:90px">Deluxe, Leisur<em>...</em></span><span class="c al k5" style="left:464px;width:35px">Mon</span><span class="c al num k6" style="left:499px;width:68px">10/04/2017</span><span class="c al k7" style="left:567px;width:35px">Fri</span><span class="c al num k8" style="left:602px;width:68px">14/04/2017</span><span class="c al k9" style="left:670px;width:62px">Tourico <em>...</em></span><span class="c ac k10" style="left:732px;width:25px">*</span><span class="c ac k11" style="left:757px;width:25px"></span><span class="c ac k12" style="left:782px;width:25px"></span><span class="c ar k13" style="left:807px;width:55px">284.99</span><span class="c ar k14" style="left:862px;width:55px">142.50</span><span class="c ar k15" style="left:917px;width:65px">284.99</span></div>
<div class="row" style="top:523px"><span class="c al first k0" style="left:0px;width:75px">Las Vegas(NV)</span><span class="c al k1" style="left:75px;width:184px">Luxor Hotel and Casino</span><span class="c al k2" style="left:259px;width:40px">4star</span><span class="c al k3" style="left:299px;width:75px">Unknown</span><span class="c al k4" style="left:374px;width:90px">Tower Deluxe <em>...</em></span><span class="c al k5" style="left:464px;width:35px">Mon</span><span class="c al num k6" style="left:499px;width:68px">10/04/2017</span><span class="c al k7" style="left:567px;width:35px">Fri</span><span class="c al num k8" style="left:602px;width:68px">14/04/2017</span><span class="c al k9" style="left:670px;width:62px">Bonotel</span><span class="c ac k10" style="left:732px;width:25px"></span><span class="c ac k11" style="left:757px;width:25px"></span><span class="c ac k12" style="left:782px;width:25px"></span><span class="c ar k13" style="left:807px;width:55px">292.07</span><span class="c ar k14" style="left:862px;width:55px">146.04</span><span class="c ar k15" style="left:917px;width:65px">292.07</span></div>
<div class="row" style="top:538px"><span class="c al first k0" style="left:0px;width:75px">Las Vegas T<em>...</em></span><span class="c al k1" style="left:75px;width:184px">Luxor Hotel &amp; Casino</span><span class="c al k2" style="left:259px;width:40px">4*</span><span class="c al k3" style="left:299px;width:75px">Roomonly</span><span class="c al k4" style="left:374px;width:90px">Standard, Leis<em>...</em></span><span class="c al k5" style="left:464px;width:35px">Mon</span><span class="c al num k6" style="left:499px;width:68px">10/04/2017</span><span class="c al k7" style="left:567px;width:35px">Fri</span><span class="c al num k8" style="left:602px;width:68px">14/04/2017</span><span class="c al k9" style="left:670px;width:62px">Tourico <em>...</em></span><span class="c ac k10" style="left:732px;width:25px">*</span><span class="c ac k11" style="left:757px;width:25px"></span><span class="c ac k12" style="left:782px;width:25px"></span><span class="c ar k13" style="left:807px;width:55px">305.34</span><span class="c ar k14" style="left:862px;width:55px">152.67</span><span class="c ar k15" style="left:917px;width:65px">305.34</span></div>
<div class="row" style="top:553px"><span class="c al first k0" style="left:0px;width:75px">Las Vegas(NV)</span><span class="c al k1" style="left:75px;width:184px">Luxor Hotel and Casino</span><span class="c al k2" style="left:259px;width:40px">4star</span><span class="c al k3" style="left:299px;width:75px">Unknown</span><span class="c al k4" style="left:374px;width:90px">Tower Luxury <em>...</em></span><span class="c al k5" style="left:464px;width:35px">Mon</span><span class="c al num k6" style="left:499px;width:68px">10/04/2017</span><span class="c al k7" style="left:567px;width:35px">Fri</span><span class="c al num k8" style="left:602px;width:68px">14/04/2017</span><span class="c al k9" style="left:670px;width:62px">Bonotel</span><span class="c ac k10" style="left:732px;width:25px"></span><span class="c ac k11" style="left:757px;width:25px"></span><span class="c ac k12" style="left:782px;width:25px"></span><span class="c ar k13" style="left:807px;width:55px">446.88</span><span class="c ar k14" style="left:862px;width:55px">223.44</span><span class="c ar k15" style="left:917px;width:65px">446.88</span></div>
<div class="row" style="top:568px"><span class="c al first k0" style="left:0px;width:75px">Las Vegas(NV)</span><span class="c al k1" style="left:75px;width:184px">Luxor Hotel and Casino</span><span class="c al k2" style="left:259px;width:40px">4star</span><span class="c al k3" style="left:299px;width:75px">Room Only</span><span class="c al k4" style="left:374px;width:90px">Tower Luxury <em>...</em></span><span class="c al k5" style="left:464px;width:35px">Mon</span><span class="c al num k6" style="left:499px;width:68px">10/04/2017</span><span class="c al k7" style="left:567px;width:35px">Fri</span><span class="c al num k8" style="left:602px;width:68px">14/04/2017</span><span class="c al k9" style="left:670px;width:62px">Bonotel</span><span class="c ac k10" style="left:732px;width:25px"></span><span class="c ac k11" style="left:757px;width:25px"></span><span class="c ac k12" style="left:782px;width:25px"></span><span class="c ar k13" style="left:807px;width:55px">464.44</span><span class="c ar k14" style="left:862px;width:55px">232.22</span><span class="c ar k15" style="left:917px;width:65px">464.44</span></div>
<div class="row" style="top:583px"><span class="c al first k0" style="left:0px;width:75px">Las Vegas T<em>...</em></span><span class="c al k1" style="left:75px;width:184px">Luxor Hotel &amp; Casino</span><span class="c al k2" style="left:259px;width:40px">4*</span><span class="c al k3" style="left:299px;width:75px">Roomonly</span><span class="c al k4" style="left:374px;width:90px">Standard, Leis<em>...</em></span><span class="c al k5" style="left:464px;width:35px">Mon</span><span class="c al num k6" style="left:499px;width:68px">10/04/2017</span><span class="c al k7" style="left:567px;width:35px">Fri</span><span class="c al num k8" style="left:602px;width:68px">14/04/2017</span><span class="c al k9" style="left:670px;width:62px">Tourico <em>...</em></span><span class="c ac k10" style="left:732px;width:25px">*</span><span class="c ac k11" style="left:757px;width:25px"></span><span class="c ac k12" style="left:782px;width:25px"></span><span class="c ar k13" style="left:807px;width:55px">468.89</span><span class="c ar k14" style="left:862px;width:55px">234.45</span><span class="c ar k15" style="left:917px;width:65px">468.89</span></div>
<div class="row" style="top:598px"><span class="c al first k0" style="left:0px;width:75px">Las Vegas T<em>...</em></span><span class="c al k1" style="left:75px;width:184px">Luxor Las Vegas</span><span class="c al k2" style="left:259px;width:40px">3.0</span><span class="c al k3" style="left:299px;width:75px">Room Only</span><span class="c al k4" style="left:374px;width:90px">Tower Luxury <em>...</em></span><span class="c al k5" style="left:464px;width:35px">Mon</span><span class="c al num k6" style="left:499px;width:68px">10/04/2017</span><span class="c al k7" style="left:567px;width:35px">Fri</span><span class="c al num k8" style="left:602px;width:68px">14/04/2017</span><span class="c al k9" style="left:670px;width:62px">Get A Bed</span><span class="c ac k10" style="left:732px;width:25px">*</span><span class="c ac k11" style="left:757px;width:25px"></span><span class="c ac k12" style="left:782px;width:25px"></span><span class="c ar k13" style="left:807px;width:55px">480.82</span><span class="c ar k14" style="left:862px;width:55px">240.41</span><span class="c ar k15" style="left:917px;width:65px">480.82</span></div>
<div class="row" style="top:613px"><span class="c al first k0" style="left:0px;width:75px">Las Vegas(NV)</span><span class="c al k1" style="left:75px;width:184px">Luxor</span><span class="c al k2" style="left:259px;width:40px">4 Stars</span><span class="c al k3" style="left:299px;width:75px">None</span><span class="c al k4" style="left:374px;width:90px">Tower Luxury <em>...</em></span><span class="c al k5" style="left:464px;width:35px">Mon</span><span class="c al num k6" style="left:499px;width:68px">10/04/2017</span><span class="c al k7" style="left:567px;width:35px">Fri</span><span class="c al num k8" style="left:602px;width:68px">14/04/2017</span><span class="c al k9" style="left:670px;width:62px">GTA</span><span class="c ac k10" style="left:732px;width:25px"></span><span class="c ac k11" style="left:757px;width:25px"></span><span class="c ac k12" style="left:782px;width:25px"></span><span class="c ar k13" style="left:807px;width:55px">483.53</span><span class="c ar k14" style="left:862px;width:55px">241.77</span><span class="c ar k15" style="left:917px;width:65px">483.53</span></div>
<!-- horizontal scrollbar -->
<div style="left:27px;top:709px;width:986px;height:16px;background:#D6D3CE"></div>
<div style="left:815px;top:709px;width:182px;height:16px;background-color:#D6D3CE;background-image:linear-gradient(45deg,#fff 25%,transparent 25%,transparent 75%,#fff 75%),linear-gradient(45deg,#fff 25%,transparent 25%,transparent 75%,#fff 75%);background-size:2px 2px;background-position:0 0,1px 1px"></div>
<div class="sbtn" style="left:27px;top:709px;width:16px;height:16px"><svg style="left:4px;top:3px" width="4" height="7" viewBox="0 0 4 7"><polygon points="4,0 4,7 0,3.5" fill="#000"/></svg></div>
<div class="sbtn" style="left:43px;top:709px;width:772px;height:16px"></div>
<div class="sbtn" style="left:997px;top:709px;width:16px;height:16px"><svg style="left:5px;top:3px" width="4" height="7" viewBox="0 0 4 7"><polygon points="0,0 0,7 4,3.5" fill="#000"/></svg></div>
<!-- footer of panel -->
<span class="t" style="left:30.4px;top:752px;letter-spacing:0.036px" id="fp">First portion: 7.2 sec, total search time: 11.0 sec</span>
<div class="btn" style="left:984px;top:747px;width:23px;height:22px"><span style="left:7px;top:1px;font-family:'Liberation Serif',serif;font-weight:bold;font-size:17px;line-height:17px;color:#0A50A0">i</span></div>
<!-- bottom tabs -->
<div style="left:23px;top:774px;width:994px;height:1px;background:#848284"></div>
<div style="left:117px;top:775px;width:154px;height:17px;background:#C6FFC6"></div>
<div style="left:271px;top:774px;width:61px;height:18px;background:#000084;border-radius:0 0 3px 3px"></div>
<div style="left:332px;top:775px;width:92px;height:17px;background:#C6C3FF"></div>
<div style="left:75px;top:775px;width:1px;height:16px;background:#848284"></div>
<div style="left:116px;top:775px;width:1px;height:16px;background:#848284"></div>
<div style="left:178px;top:775px;width:1px;height:16px;background:#848284"></div>
<div style="left:224px;top:775px;width:1px;height:16px;background:#848284"></div>
<div style="left:270px;top:775px;width:1px;height:16px;background:#848284"></div>
<div style="left:377px;top:775px;width:1px;height:16px;background:#848284"></div>
<div style="left:423px;top:775px;width:1px;height:16px;background:#848284"></div>
<div style="left:519px;top:775px;width:1px;height:16px;background:#848284"></div>
<span class="t" style="left:26.2px;top:777px;letter-spacing:-0.467px" id="bt1">Summary</span>
<span class="t" style="left:78.6px;top:777px;letter-spacing:-0.38px" id="bt2">Search</span>
<span class="t" style="left:119.8px;top:777px;letter-spacing:-0.477px" id="bt3">Acc 2A LAX</span>
<span class="t" style="left:182px;top:777px;letter-spacing:-0.6px" id="bt4">Car LAX</span>
<span class="t" style="left:227.8px;top:777px;letter-spacing:-0.1px" id="bt5">Tour 2A</span>
<span class="t" style="left:274.4px;top:777px;color:#fff;letter-spacing:-0.5px" id="bt6">Acc 2A LAS</span>
<span class="t" style="left:335.8px;top:777px;letter-spacing:-0.667px" id="bt7">Car LAS</span>
<span class="t" style="left:382.2px;top:777px;letter-spacing:-0.166px" id="bt8">Tour 2A</span>
<span class="t" style="left:427px;top:777px;letter-spacing:-0.376px" id="bt9">Financial Summary</span>
<!-- status bar -->
<span class="t" style="left:311.8px;top:801px;letter-spacing:-0.16px" id="st1">User: 270 - Danielle Charman</span>
<span class="t" style="left:462.6px;top:801px;letter-spacing:-0.049px" id="st2">Retailer: 'Ocean California'</span>
<span class="t" style="left:600.6px;top:801px;letter-spacing:0.045px" id="st3">Client: none</span>
<span class="t" style="left:963px;top:801px;letter-spacing:-0.425px" id="st4">14:21 GMT</span>
<!-- taskbar -->
<div style="left:0;top:834px;width:1148px;height:1px;background:#fff"></div>
<div style="left:982px;top:837px;width:166px;height:38px;border-top:1px solid #848284;border-left:1px solid #848284;border-bottom:1px solid #fff"></div>
<!-- tray icons -->
<svg style="left:989px;top:848px" width="16" height="16" viewBox="0 0 16 16"><defs><linearGradient id="a1" x1="0" y1="0" x2="1" y2="1"><stop offset="0" stop-color="#FCC030"/><stop offset="1" stop-color="#E86010"/></linearGradient><linearGradient id="a2" x1="0" y1="0" x2="1" y2="1"><stop offset="0" stop-color="#1468B8"/><stop offset="1" stop-color="#48A8E8"/></linearGradient><linearGradient id="a3" x1="0" y1="0" x2="1" y2="1"><stop offset="0" stop-color="#58B050"/><stop offset="1" stop-color="#2C8C38"/></linearGradient><linearGradient id="a4" x1="0" y1="0" x2="1" y2="1"><stop offset="0" stop-color="#D01810"/><stop offset="1" stop-color="#F88010"/></linearGradient></defs><path d="M0.8 1 L6.8 0.2 L8.6 8 L0.4 8.8 Z" fill="url(#a1)"/><path d="M6.8 0.2 L15.6 1.2 L15.4 6.8 L8.6 8 Z" fill="url(#a2)"/><path d="M0.4 8.8 L8.6 8 L9 15 L0.6 14.8 Z" fill="url(#a3)"/><path d="M8.6 8 L15.4 6.8 L14.8 15.8 L9 15 Z" fill="url(#a4)"/></svg>
<svg style="left:1012px;top:850px" width="18" height="12" viewBox="0 0 18 12"><defs><linearGradient id="gc" x1="0" y1="0" x2="0" y2="1"><stop offset="0" stop-color="#30B818"/><stop offset=".5" stop-color="#90E070"/><stop offset="1" stop-color="#38B820"/></linearGradient></defs><rect x="1.5" y="1.8" width="12.4" height="6.6" rx="1" fill="url(#gc)" stroke="#108010" stroke-width="1"/><rect x="10.4" y="2.6" width="2.8" height="2.6" fill="#080808"/><path d="M14.6 0.8 V9.6 M14.6 1.2 H17 M14.6 4.6 H16.4" stroke="#101010" stroke-width="1.3" fill="none"/><path d="M5.4 9.4 v1.4 M7.4 9.4 v1.4 M9.4 9.4 v1.4 M11.4 9.4 v1.4" stroke="#E8D010" stroke-width="1.3"/></svg>
<svg style="left:1037px;top:848px" width="17" height="16" viewBox="0 0 17 16"><rect x="4.5" y="2.5" width="11" height="10" rx="1" fill="#F0F0F0" stroke="#787878"/><rect x="6" y="4" width="8" height="7" fill="#B4B4B8"/><path d="M6 4 h8 l-8 7z" fill="#C8C8CC"/><rect x="6.5" y="13.5" width="8" height="1.6" fill="#E8E8E8" stroke="#848284" stroke-width=".6"/><path d="M1.3 0.8 V5.6 Q1.3 7.6 3.3 7.6 Q5.3 7.6 5.3 5.6 V0.8 M3.3 0.6 V5 M3.3 7.6 V15.6" stroke="#585858" stroke-width="2.6" fill="none"/><path d="M1.3 0.8 V5.6 Q1.3 7.6 3.3 7.6 Q5.3 7.6 5.3 5.6 V0.8 M3.3 7.6 V15.6" stroke="#fff" stroke-width="1" fill="none"/></svg>
<svg style="left:1060px;top:848px" width="18" height="17" viewBox="0 0 18 17"><defs><linearGradient id="sp" x1="0" x2="1"><stop offset="0" stop-color="#fff"/><stop offset="1" stop-color="#A0A0A0"/></linearGradient></defs><path d="M1.4 5 H3.4 L7.6 1 V14.4 L3.4 10.6 H1.4 Z" fill="url(#sp)" stroke="#909090" stroke-width=".8"/><circle cx="12.4" cy="10.8" r="4.5" fill="#EC1C24"/><circle cx="12.4" cy="10.8" r="4.5" fill="none" stroke="#F8B0B0" stroke-width=".6"/><path d="M10.4 8.8 L14.4 12.8 M14.4 8.8 L10.4 12.8" stroke="#fff" stroke-width="1.6"/></svg>
<span class="t" style="left:1104.6px;top:842px;letter-spacing:-0.1px" id="clk1">14:21</span>
<span class="t" style="left:1090.6px;top:858px;letter-spacing:0" id="clk2">03/08/2016</span>
</body></html>
